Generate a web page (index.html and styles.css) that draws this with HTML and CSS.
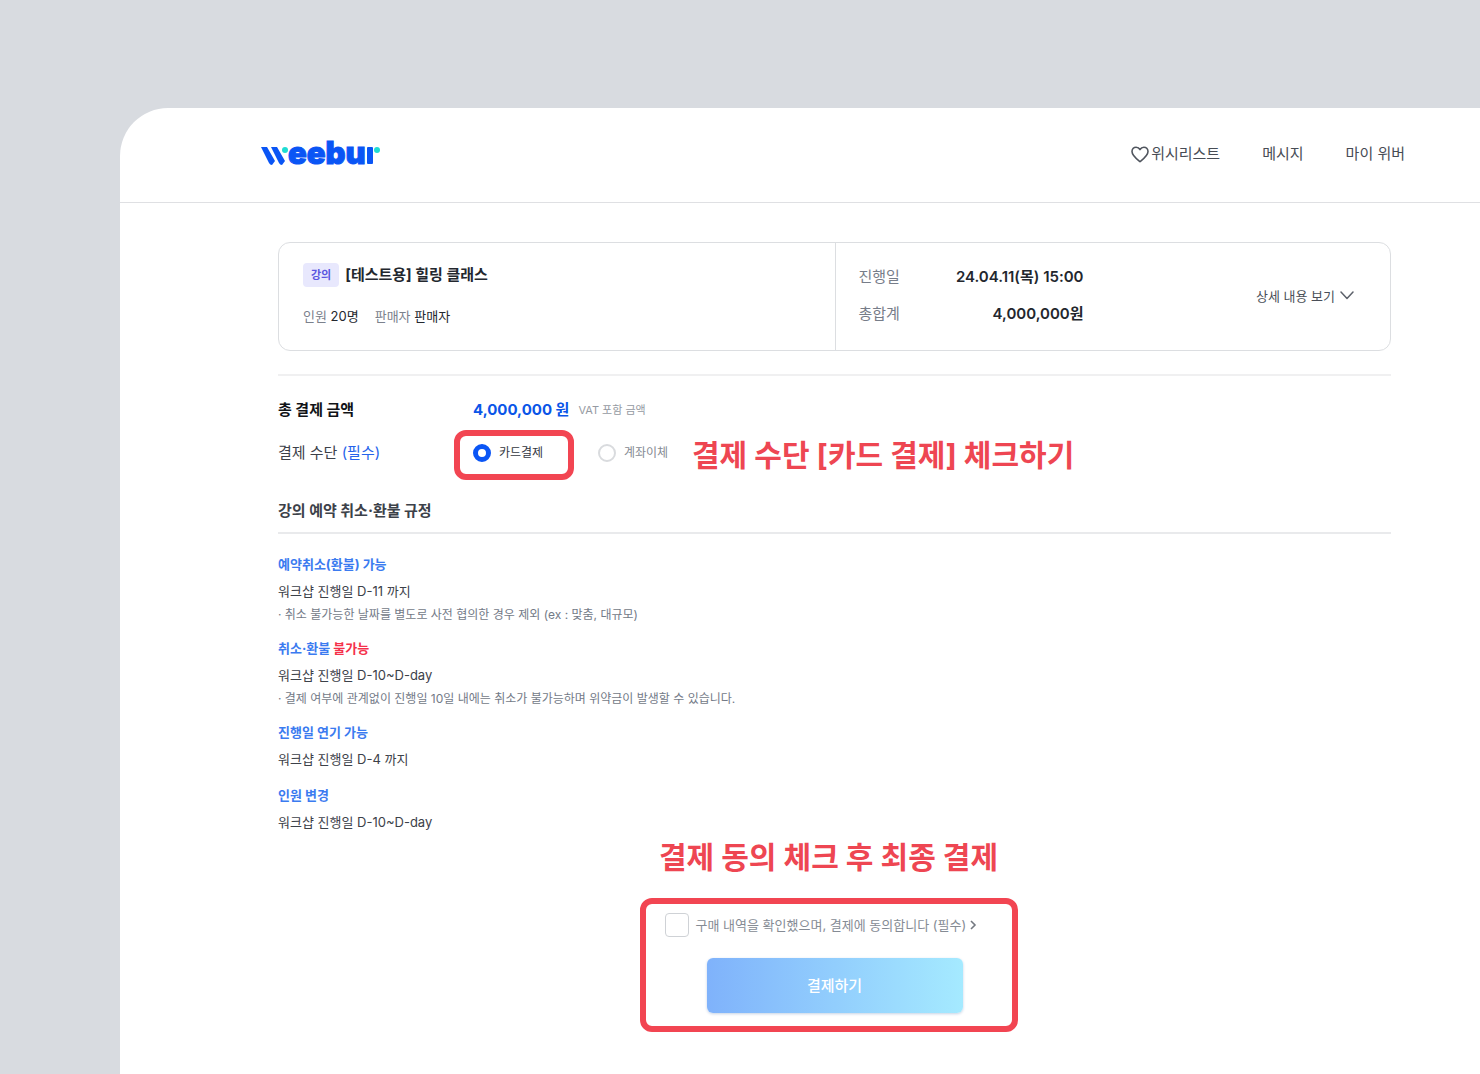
FILE: index.html
```html
<!DOCTYPE html>
<html lang="ko">
<head>
<meta charset="utf-8">
<meta name="viewport" content="width=device-width, initial-scale=1">
<title>weebur 결제</title>
<link rel="stylesheet" href="styles.css">
</head>
<body>
<div class="panel">
  <header class="header">
    <a class="logo" href="#" aria-label="weebur">
      <svg width="122" height="44" viewBox="0 -7 122 44" aria-hidden="true">
        <path fill="#0a55f5" d="M0 8h6l8 14-3 4q-2 0-3-2zM10 8h6l8 14-3 4q-2 0-3-2z"/>
        <circle cx="24" cy="11" r="3" fill="#1fdcd3"/>
        <text class="logo-text" x="27" y="25">eebu</text>
        <rect x="106" y="8" width="6" height="17" rx="1" fill="#0a55f5"/>
        <circle cx="116" cy="11" r="3" fill="#1fdcd3"/>
      </svg>
    </a>
    <nav class="nav">
      <a class="nav-link" href="#">
        <svg width="18" height="17" viewBox="0 0 18 17" fill="none" stroke="#50555e" stroke-width="1.6" stroke-linejoin="round" aria-hidden="true"><path d="M9 15.6C6.500 13.600 1 9.700 1 5.500 1 3 2.900 1.200 5.100 1.200 6.800 1.200 8.200 2.100 9 3.600 9.800 2.100 11.200 1.200 12.900 1.200 15.100 1.200 17 3 17 5.500 17 9.700 11.500 13.600 9 15.600Z"/></svg>
        위시리스트</a>
      <a class="nav-link" href="#">메시지</a>
      <a class="nav-link" href="#">마이 위버</a>
    </nav>
  </header>

  <main class="main">
    <section class="summary">
      <div class="summary-class">
        <div class="class-title"><span class="tag">강의</span><h1 class="class-name">[테스트용] 힐링 클래스</h1></div>
        <p class="class-meta"><span>인원 <b>20명</b></span><span>판매자 <b>판매자</b></span></p>
      </div>
      <div class="summary-order">
        <dl class="order">
          <div class="order-row"><dt>진행일</dt><dd>24.04.11(목) 15:00</dd></div>
          <div class="order-row"><dt>총합계</dt><dd>4,000,000원</dd></div>
        </dl>
        <button class="details" type="button">상세 내용 보기
          <svg width="14" height="9" viewBox="0 0 14 9" fill="none" stroke="#5d626b" stroke-width="1.5" stroke-linecap="round" stroke-linejoin="round" aria-hidden="true"><path d="M1 1l6 6.500L13 1"/></svg>
        </button>
      </div>
    </section>

    <section class="payment">
      <div class="pay-row">
        <h2 class="pay-title">총 결제 금액</h2>
        <p class="price">4,000,000 원</p>
        <p class="vat">VAT 포함 금액</p>
      </div>
      <div class="pay-row" role="radiogroup" aria-labelledby="method">
        <p class="pay-label" id="method">결제 수단 <span class="required">(필수)</span></p>
        <label class="method method-card"><input class="radio" type="radio" name="method" checked>카드결제</label>
        <label class="method"><input class="radio" type="radio" name="method">계좌이체</label>
        <p class="note note-method">결제 수단 [카드 결제] 체크하기</p>
      </div>
    </section>

    <section class="policy">
      <h2 class="policy-title">강의 예약 취소·환불 규정</h2>
      <div class="rule">
        <h3 class="rule-title">예약취소(환불) 가능</h3>
        <p class="rule-text">워크샵 진행일 D-11 까지</p>
        <p class="rule-hint">· 취소 불가능한 날짜를 별도로 사전 협의한 경우 제외 (ex : 맞춤, 대규모)</p>
      </div>
      <div class="rule">
        <h3 class="rule-title">취소·환불 <span class="denied">불가능</span></h3>
        <p class="rule-text">워크샵 진행일 D-10~D-day</p>
        <p class="rule-hint">· 결제 여부에 관계없이 진행일 10일 내에는 취소가 불가능하며 위약금이 발생할 수 있습니다.</p>
      </div>
      <div class="rule">
        <h3 class="rule-title">진행일 연기 가능</h3>
        <p class="rule-text">워크샵 진행일 D-4 까지</p>
      </div>
      <div class="rule">
        <h3 class="rule-title">인원 변경</h3>
        <p class="rule-text">워크샵 진행일 D-10~D-day</p>
      </div>
    </section>

    <section class="checkout">
      <p class="note note-final">결제 동의 체크 후 최종 결제</p>
      <form class="checkout-box">
        <div class="agree">
          <input class="check" type="checkbox" id="agree">
          <label class="agree-label" for="agree">구매 내역을 확인했으며, 결제에 동의합니다 (필수)</label>
          <svg width="7" height="10" viewBox="0 0 7 10" fill="none" stroke="#747981" stroke-width="1.6" aria-hidden="true"><path d="M1 1l4 4-4 4"/></svg>
        </div>
        <button class="pay" type="button">결제하기</button>
      </form>
    </section>
  </main>
</div>
</body>
</html>
```
FILE: styles.css
```css
* { box-sizing: border-box; }

body {
  margin: 0;
  background: #d8dbe0;
  color: #3c4149;
  font-family: Inter, "Noto Sans CJK KR", sans-serif;
  font-size: 13px;
  line-height: 24px;
}

h1, h2, h3, p, dl, dd { margin: 0; }

button, input { font: inherit; margin: 0; }

.panel {
  margin: 108px 0 0 120px;
  min-height: calc(100vh - 108px);
  background: #fff;
  border-top-left-radius: 48px;
}

.header {
  display: flex;
  justify-content: space-between;
  align-items: center;
  height: 95px;
  padding: 0 75px 2px 141px;
  border-bottom: 1px solid #dfe0e3;
}

.logo { display: flex; }

.logo-text {
  fill: #0a55f5;
  stroke: #0a55f5;
  stroke-width: 1px;
  font-size: 31px;
  font-weight: 900;
}

.nav { display: flex; gap: 42px; }

.nav-link {
  display: flex;
  align-items: center;
  gap: 2px;
  color: #474c55;
  font-size: 15px;
  text-decoration: none;
}

.main { padding: 39px 89px 40px 158px; }

.summary {
  display: grid;
  grid-template-columns: 1fr 1fr;
  height: 109px;
  border: 1px solid #dcdee1;
  border-radius: 12px;
}

.summary-class { padding: 20px 24px; }

.class-title { display: flex; align-items: center; gap: 6px; }

.tag {
  padding: 0 8px;
  border-radius: 4px;
  background: #e8e8fd;
  color: #5a55e0;
  font-size: 11px;
  font-weight: 700;
}

.class-name { color: #23272e; font-size: 15px; font-weight: 700; }

.class-meta { display: flex; gap: 16px; margin-top: 17px; color: #7b818c; }

.class-meta b { color: #23272e; font-weight: 400; }

.summary-order {
  display: flex;
  justify-content: space-between;
  align-items: center;
  padding: 0 36px 2px 23px;
  border-left: 1px solid #dcdee1;
}

.order { display: grid; gap: 13px; width: 225px; }

.order-row { display: flex; justify-content: space-between; font-size: 15px; }

.order-row dt { color: #777d89; }

.order-row dd { color: #23272e; font-weight: 600; }

.details {
  display: flex;
  align-items: center;
  gap: 5px;
  padding: 0;
  border: 0;
  background: none;
  color: #4a4f58;
}

.payment {
  display: grid;
  gap: 19px;
  margin-top: 23px;
  padding-top: 22px;
  border-top: 2px solid #f0f0f1;
}

.pay-row { display: flex; align-items: center; height: 24px; }

.pay-title, .pay-label { width: 195px; font-size: 15px; }

.pay-title { color: #111317; font-weight: 700; }

.required { color: #2563eb; }

.price { color: #0a55e8; font-size: 15px; font-weight: 700; }

.vat { margin-left: 9px; color: #959aa2; font-size: 11px; }

.method {
  position: relative;
  display: flex;
  align-items: center;
  gap: 8px;
  width: 125px;
  color: #858a93;
  font-size: 12px;
}

.method-card { color: #33373f; }

.method + .method { width: 94px; }

/* Highlight ring around the card option */
.method-card::after {
  content: "";
  position: absolute;
  inset: -11px 24px -15px -19px;
  border: 6px solid #f24552;
  border-radius: 12px;
  pointer-events: none;
}

.radio {
  appearance: none;
  width: 18px;
  height: 18px;
  border: 2px solid #d9dbde;
  border-radius: 50%;
  background: #fff;
}

.radio:checked { border: 5px solid #0a55f5; }

.note {
  color: #ee4652;
  font-size: 30px;
  font-weight: 700;
  line-height: 40px;
  white-space: nowrap;
}

.note-method { padding-top: 4px; }

.policy { margin-top: 34px; }

.policy-title {
  margin-bottom: 20px;
  padding-bottom: 9px;
  border-bottom: 2px solid #e9eaec;
  color: #3c4149;
  font-size: 15px;
  font-weight: 700;
}

.rule + .rule { margin-top: 14px; }

.rule-title {
  margin-bottom: 5px;
  color: #3b7bf0;
  font-size: 13px;
  font-weight: 700;
  line-height: 20px;
}

.denied { color: #f5304a; }

.rule-hint { padding-top: 3px; color: #737a87; font-size: 12px; line-height: 18px; }

.checkout { width: 390px; margin: 3px auto 0; padding-right: 12px; }

.note-final { text-align: center; }

.checkout-box {
  display: grid;
  gap: 21px;
  margin-top: 21px;
  padding: 9px 7px 13px 19px;
  border: 6px solid #f24552;
  border-radius: 12px;
}

.agree { display: flex; align-items: center; color: #858b94; }

.agree-label { margin: 0 4px 0 7px; }

.check {
  appearance: none;
  width: 24px;
  height: 24px;
  border: 1px solid #cfd2d6;
  border-radius: 4px;
  background: #fff;
}

.pay {
  justify-self: center;
  width: 256px;
  height: 55px;
  border: 0;
  border-radius: 6px;
  background: linear-gradient(90deg, #7fb2fb, #a5eaff);
  box-shadow: 0 1px 3px #c5d2e4;
  color: #fff;
  font-size: 15px;
  font-weight: 500;
}
```
